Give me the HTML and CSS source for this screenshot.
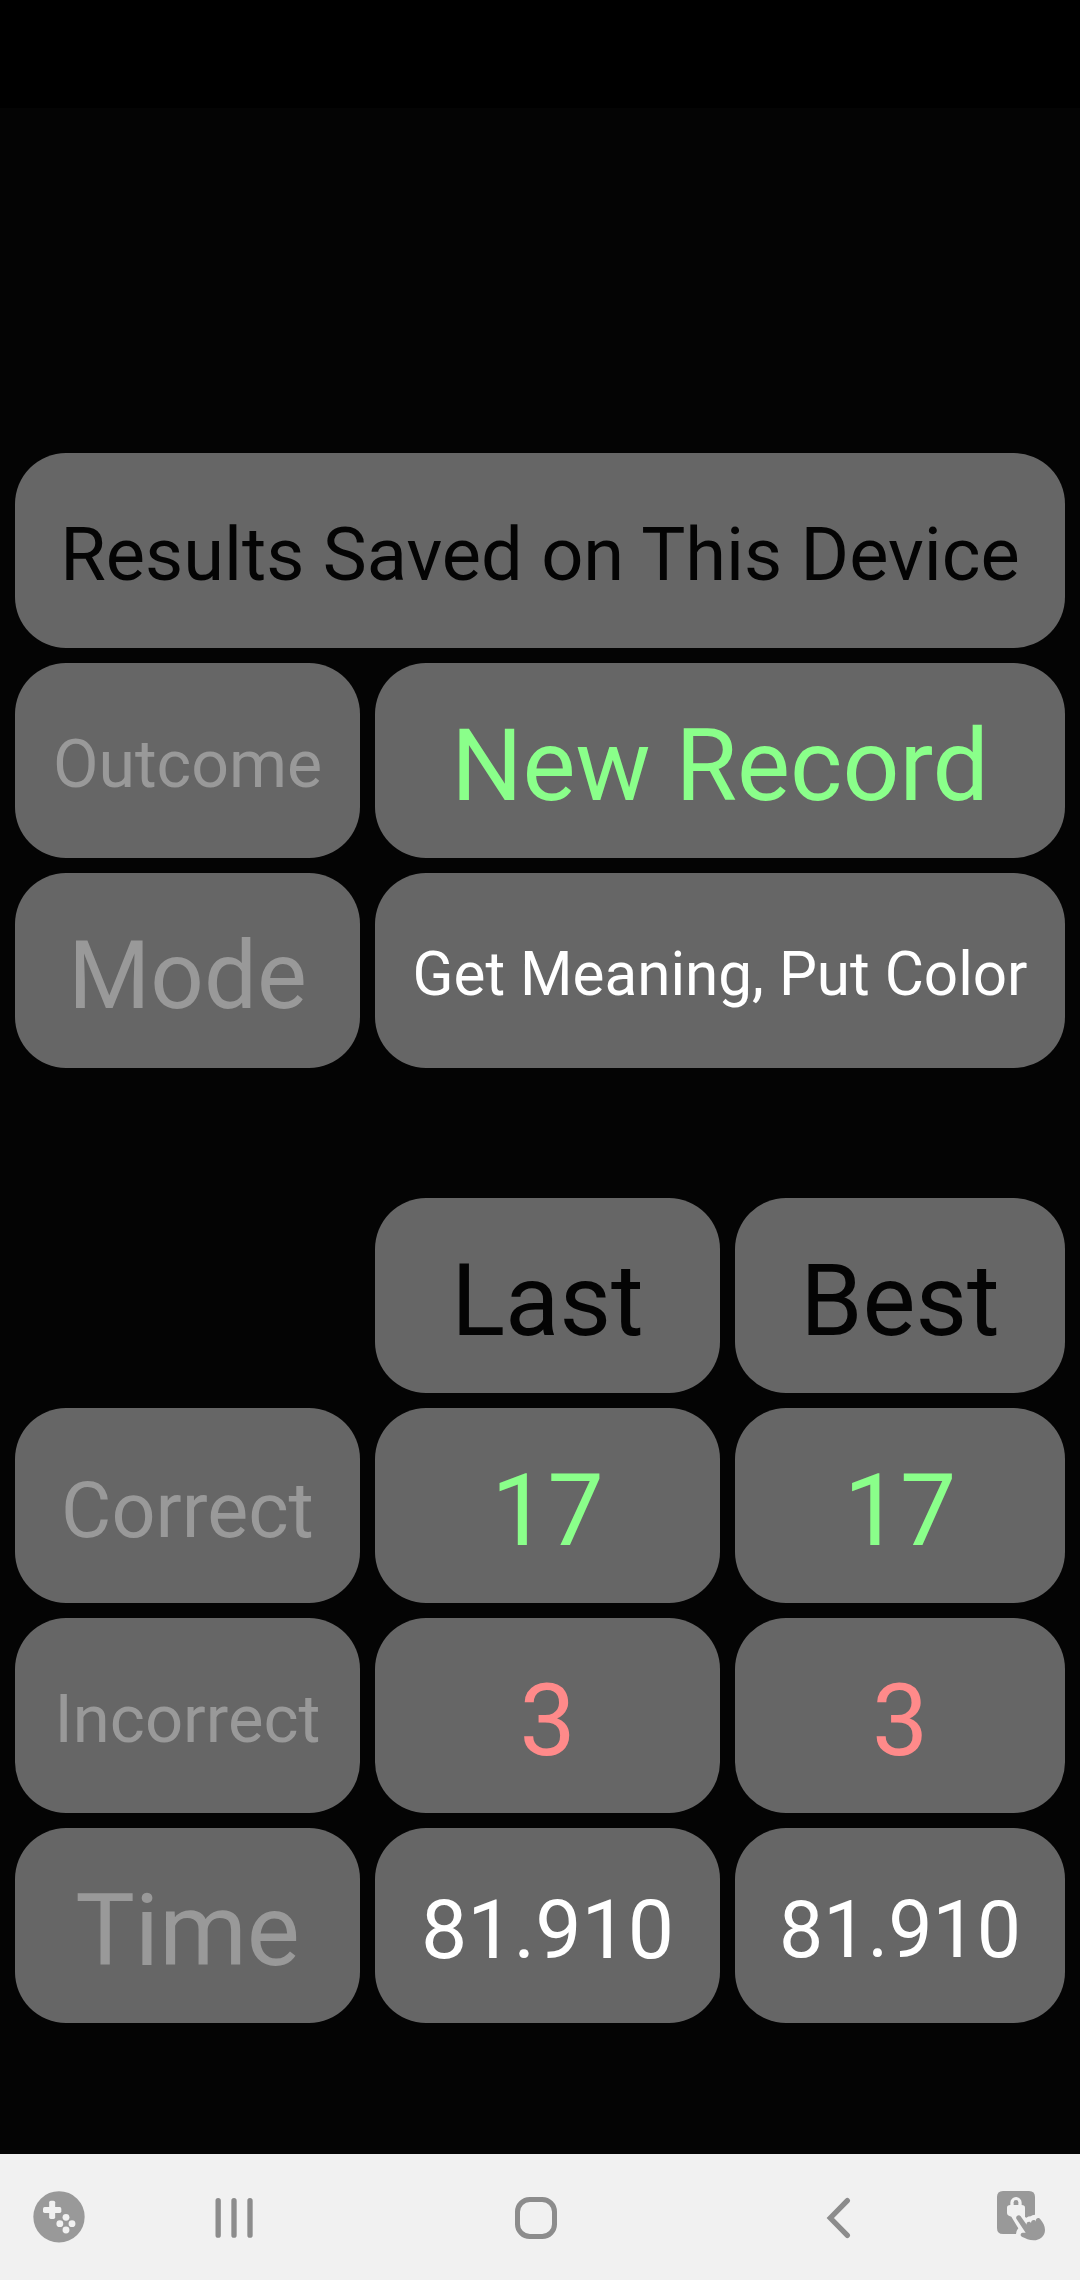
FILE: index.html
```html
<!DOCTYPE html>
<html lang="en">
<head>
<meta charset="utf-8">
<title>Results</title>
<link rel="stylesheet" href="styles.css">
</head>
<body>
<div class="status"></div>
<main class="results">
  <section class="grid">
    <div class="cell full black s74 low"><span>Results Saved on This Device</span></div>
    <div class="cell label s66 low"><span>Outcome</span></div>
    <div class="cell wide good s100"><span>New Record</span></div>
    <div class="cell label s94 low"><span>Mode</span></div>
    <div class="cell wide s60 lower"><span>Get Meaning, Put Color</span></div>
  </section>
  <section class="grid">
    <div class="cell head black s100"><span>Last</span></div>
    <div class="cell black s100"><span>Best</span></div>
    <div class="cell label s77 lower"><span>Correct</span></div>
    <div class="cell good s100"><span>17</span></div>
    <div class="cell good s100"><span>17</span></div>
    <div class="cell label s67"><span>Incorrect</span></div>
    <div class="cell bad s100"><span>3</span></div>
    <div class="cell bad s100"><span>3</span></div>
    <div class="cell label s100"><span>Time</span></div>
    <div class="cell s82 low"><span>81.910</span></div>
    <div class="cell s79 low"><span>81.910</span></div>
  </section>
</main>
<nav class="nav">
  <svg class="icon" viewBox="87 141 180 180">
    <circle cx="177" cy="230.500" r="77" fill="#999"/>
    <g fill="#f1f1f1">
      <rect x="129" y="201" width="55" height="18" rx="5"/>
      <rect x="147.500" y="182" width="18" height="55" rx="5"/>
      <circle cx="198" cy="232" r="10.300"/>
      <circle cx="179.500" cy="251" r="10.300"/>
      <circle cx="216" cy="251" r="10.300"/>
      <circle cx="198" cy="270" r="10.300"/>
    </g>
  </svg>
  <svg class="icon" viewBox="612 141 180 180">
    <path d="M654.500 182V285.500M702 182V285.500M750 182V285.500" fill="none" stroke="#8c8c8c" stroke-width="16" stroke-linecap="round"/>
  </svg>
  <svg class="icon" viewBox="78 141 180 180">
    <rect x="112.500" y="178.500" width="111" height="111" rx="37" fill="none" stroke="#8c8c8c" stroke-width="15"/>
  </svg>
  <svg class="icon" viewBox="24 141 180 180">
    <path d="M142 182L91 234L142 286" fill="none" stroke="#8c8c8c" stroke-width="16" stroke-linecap="round"/>
  </svg>
  <svg class="icon" viewBox="561 141 180 180">
    <path fill="#999" d="M609 153H687Q705 153 705 171V224Q696 225 692 229Q685 229 679 233L675 231V203Q675 195 665 195V188A17 17 0 0 0 631 188V195Q621 195 621 203V219Q621 227 634 230L655 265Q648 272 648 282H609Q591 282 591 264V171Q591 153 609 153Z"/>
    <path fill="#999" d="M641 195V187A7 7 0 0 1 655 187V195Z"/>
    <path fill="#999" d="M649 236C646 228 657 222 662 229L680 254C678 246 689 242 693 249C693 240 704 237 708 245C705 235 716 230 721 238C729 248 735 258 735 270C735 289 719 301 701 301C688 301 676 295 667 291C660 289 660 279 668 278L677 278Z"/>
  </svg>
</nav>
</body>
</html>
```
FILE: styles.css
```css
* { box-sizing: border-box; }

body {
  margin: 0;
  width: 1080px;
  height: 2280px;
  display: flex;
  flex-direction: column;
  background: #040404;
  color: #fff;
  font-family: Roboto, sans-serif;
}

.status { height: 108px; background: #000; }

.results {
  flex: 1;
  display: flex;
  flex-direction: column;
  gap: 130px;
  padding: 345px 15px 0;
}

.grid {
  display: grid;
  grid-template-columns: 345px 345px 330px;
  grid-auto-rows: 195px;
  gap: 15px;
}

.cell {
  display: flex;
  align-items: center;
  justify-content: center;
  border-radius: 51px;
  background: #666;
  line-height: 1.172;
  white-space: nowrap;
}

/* Optical drop of the text line inside its cell */
.cell span { padding-top: 0.102em; }
.low span { padding-top: calc(0.102em + 2px); }
.lower span { padding-top: calc(0.102em + 4px); }

.full { grid-column: 1 / -1; }
.wide { grid-column: span 2; }
.head { grid-column: 2; }

.black { color: #040404; }
.label { color: #999; }
.good { color: #8aff8a; }
.bad { color: #ff8a8a; }

.s60 { font-size: 60.2px; }
.s66 { font-size: 66.2px; }
.s67 { font-size: 67px; }
.s74 { font-size: 74px; }
.s77 { font-size: 77.3px; }
.s79 { font-size: 78.8px; }
.s82 { font-size: 82.4px; }
.s94 { font-size: 94px; }
.s100 { font-size: 100px; }

.nav {
  height: 126px;
  display: grid;
  grid-template-columns: 118px 232px 372px 232px 126px;
  align-items: center;
  justify-items: center;
  background: #f1f1f1;
}

.icon { display: block; width: 60px; height: 60px; }
```
